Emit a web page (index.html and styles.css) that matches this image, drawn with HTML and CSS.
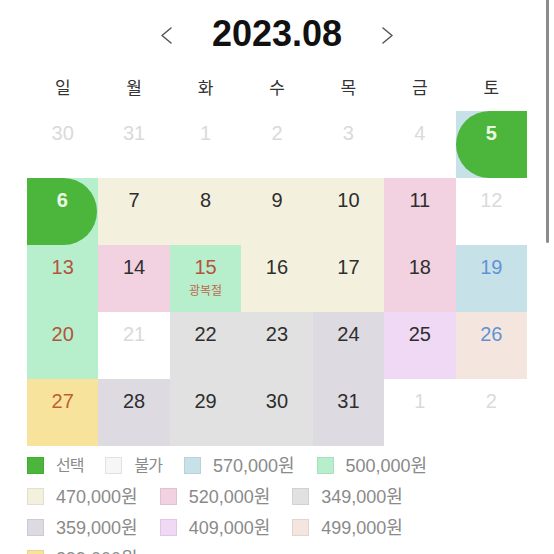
FILE: index.html
```html
<!DOCTYPE html>
<html lang="ko">
<head>
<meta charset="utf-8">
<title>2023.08</title>
<link rel="stylesheet" href="styles.css">
</head>
<body>
<div class="app">
  <div class="scrollbar"></div>
  <header class="month-nav">
    <button class="nav-btn" aria-label="이전 달">
      <svg width="13" height="17" viewBox="0 0 13 17"><polyline points="11,1 2,8.5 11,16" fill="none" stroke="#555" stroke-width="1.5" stroke-linejoin="round" stroke-linecap="round"/></svg>
    </button>
    <h1 class="month-title">2023.08</h1>
    <button class="nav-btn" aria-label="다음 달">
      <svg width="13" height="17" viewBox="0 0 13 17"><polyline points="2,1 11,8.5 2,16" fill="none" stroke="#555" stroke-width="1.5" stroke-linejoin="round" stroke-linecap="round"/></svg>
    </button>
  </header>

  <div class="weekdays">
    <span>일</span><span>월</span><span>화</span><span>수</span><span>목</span><span>금</span><span>토</span>
  </div>

  <div class="calendar">
    <div class="day off"><span class="num">30</span></div>
    <div class="day off"><span class="num">31</span></div>
    <div class="day off"><span class="num">1</span></div>
    <div class="day off"><span class="num">2</span></div>
    <div class="day off"><span class="num">3</span></div>
    <div class="day off"><span class="num">4</span></div>
    <div class="day picked p570"><div class="pick start"><span class="num">5</span></div></div>

    <div class="day picked p500"><div class="pick end"><span class="num">6</span></div></div>
    <div class="day p470"><span class="num">7</span></div>
    <div class="day p470"><span class="num">8</span></div>
    <div class="day p470"><span class="num">9</span></div>
    <div class="day p470"><span class="num">10</span></div>
    <div class="day p520"><span class="num">11</span></div>
    <div class="day off"><span class="num">12</span></div>

    <div class="day p500 sun"><span class="num">13</span></div>
    <div class="day p520"><span class="num">14</span></div>
    <div class="day p500 sun"><span class="num">15</span><span class="holiday">광복절</span></div>
    <div class="day p470"><span class="num">16</span></div>
    <div class="day p470"><span class="num">17</span></div>
    <div class="day p520"><span class="num">18</span></div>
    <div class="day p570 sat"><span class="num">19</span></div>

    <div class="day p500 sun"><span class="num">20</span></div>
    <div class="day off"><span class="num">21</span></div>
    <div class="day p349"><span class="num">22</span></div>
    <div class="day p349"><span class="num">23</span></div>
    <div class="day p359"><span class="num">24</span></div>
    <div class="day p409"><span class="num">25</span></div>
    <div class="day p499 sat"><span class="num">26</span></div>

    <div class="day p399 sun"><span class="num">27</span></div>
    <div class="day p359"><span class="num">28</span></div>
    <div class="day p349"><span class="num">29</span></div>
    <div class="day p349"><span class="num">30</span></div>
    <div class="day p359"><span class="num">31</span></div>
    <div class="day off"><span class="num">1</span></div>
    <div class="day off"><span class="num">2</span></div>
  </div>

  <ul class="legend">
    <li><span class="swatch sw-pick"></span><span class="label ko">선택</span></li>
    <li><span class="swatch sw-off"></span><span class="label ko">불가</span></li>
    <li><span class="swatch p570"></span><span class="label">570,000원</span></li>
    <li><span class="swatch p500"></span><span class="label">500,000원</span></li>
    <li><span class="swatch p470"></span><span class="label">470,000원</span></li>
    <li><span class="swatch p520"></span><span class="label">520,000원</span></li>
    <li><span class="swatch p349"></span><span class="label">349,000원</span></li>
    <li><span class="swatch p359"></span><span class="label">359,000원</span></li>
    <li><span class="swatch p409"></span><span class="label">409,000원</span></li>
    <li><span class="swatch p499"></span><span class="label">499,000원</span></li>
    <li><span class="swatch p399"></span><span class="label">399,000원</span></li>
  </ul>
</div>
</body>
</html>
```

FILE: styles.css
```css
html, body {
  margin: 0;
  padding: 0;
  height: 554px;
  overflow: hidden;
  background: #fff;
}

.app {
  position: relative;
  width: 554px;
  padding: 0 27px;
  box-sizing: border-box;
  font-family: "Liberation Sans", "Noto Sans CJK KR", sans-serif;
  color: #2a2a2a;
}

.scrollbar {
  position: absolute;
  top: 0;
  right: 5px;
  width: 3px;
  height: 243px;
  background: #8c8c8c;
  border-radius: 0 0 2px 2px;
}

.month-nav {
  height: 68px;
  display: flex;
  align-items: center;
  justify-content: center;
  gap: 39px;
}

.nav-btn {
  border: 0;
  background: none;
  padding: 0;
  width: 13px;
  height: 17px;
  display: flex;
  margin-top: 3px;
}

.month-title {
  margin: 0;
  font-size: 36px;
  line-height: 1;
  font-weight: 700;
  color: #111;
  width: 130px;
  text-align: center;
}

.weekdays {
  height: 36px;
  display: grid;
  grid-template-columns: repeat(7, 1fr);
  align-items: center;
  text-align: center;
  font-family: "Noto Sans CJK KR", sans-serif;
  font-size: 17px;
  color: #333;
}

.calendar {
  margin-top: 7px;
  display: grid;
  grid-template-columns: repeat(7, 1fr);
  grid-auto-rows: 67px;
}

.day {
  display: flex;
  flex-direction: column;
  align-items: center;
  padding-top: 11px;
  box-sizing: border-box;
}

.num {
  font-size: 20px;
  line-height: 23px;
  color: #2e2e2e;
}

.off .num { color: #dadada; }
.sun .num { color: #b5533c; }
.sat .num { color: #5f93d6; }
.p399.sun .num { color: #bf5f2c; }

.holiday {
  margin-top: 4px;
  font-family: "Noto Sans CJK KR", sans-serif;
  font-size: 12px;
  line-height: 14px;
  color: #c06650;
}

.day.picked {
  padding-top: 0;
  align-items: stretch;
}

.pick {
  flex: 1;
  background: #4cb63c;
  display: flex;
  flex-direction: column;
  align-items: center;
  padding-top: 11px;
  box-sizing: border-box;
}

.pick .num {
  color: #eafbe2;
  font-weight: 700;
}

.pick.start { border-radius: 34px 0 0 34px; }
.pick.end { border-radius: 0 34px 34px 0; margin-right: 1px; }

.p570 { background: #c7e1e8; }
.p500 { background: #b7efcd; }
.p470 { background: #f3f1de; }
.p520 { background: #f2d2e0; }
.p349 { background: #e1e1e1; }
.p359 { background: #dedae2; }
.p409 { background: #f0d9f4; }
.p499 { background: #f4e5df; }
.p399 { background: #f8e39d; }

.legend {
  list-style: none;
  margin: 4px 0 0;
  padding: 0;
  display: flex;
  flex-wrap: wrap;
  column-gap: 22px;
}

.legend li {
  height: 31px;
  display: flex;
  align-items: center;
  gap: 12px;
}

.label {
  font-size: 18px;
  line-height: 22px;
  color: #8a8a8a;
  white-space: nowrap;
}

.label.ko {
  font-size: 16px;
  letter-spacing: -1px;
}

.swatch {
  flex: none;
  width: 17px;
  height: 17px;
  box-sizing: border-box;
  border: 1px solid rgba(0, 0, 0, 0.07);
}

.sw-pick { background: #4cb63c; border-color: #46a836; }
.sw-off { background: #f6f6f6; border-color: #e2e2e2; }
```
